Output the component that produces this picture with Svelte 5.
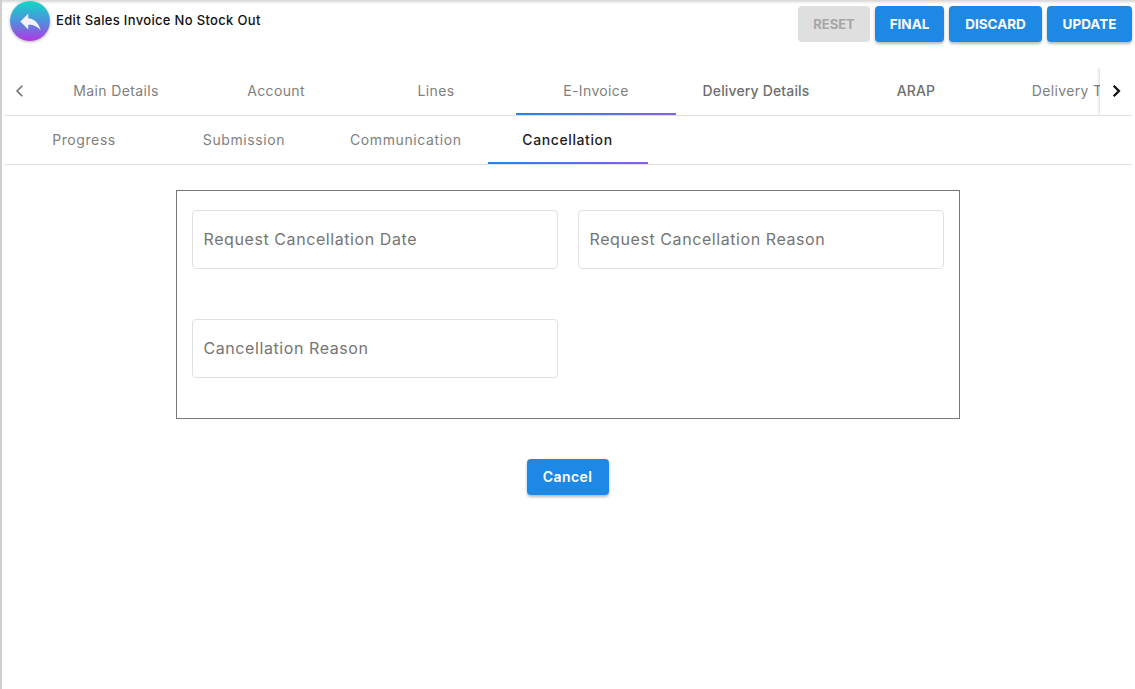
<script>
  const mainTabs = ['Main Details', 'Account', 'Lines', 'E-Invoice', 'Delivery Details', 'ARAP', 'Delivery Trip']
  const subTabs = ['Progress', 'Submission', 'Communication', 'Cancellation']
  let activeMain = 'E-Invoice'
  let activeSub = 'Cancellation'
  const actions = [
    { label: 'FINAL', width: 69 },
    { label: 'DISCARD', width: 93 },
    { label: 'UPDATE', width: 85 }
  ]
</script>

<div class="page">
  <header class="topbar">
    <div class="title-wrap">
      <button class="back" aria-label="Back">
        <svg viewBox="0 0 24 24" width="27" height="27">
          <path fill="#f4f1fb" d="M10 9V5l-7 7 7 7v-4.1c5 0 8.5 1.6 11 5.1-1-5-4-10-11-11z" />
        </svg>
      </button>
      <span class="title">Edit Sales Invoice No Stock Out</span>
    </div>
    <div class="actions">
      <button class="btn disabled" disabled>RESET</button>
      {#each actions as a}
        <button class="btn" style="width: {a.width}px">{a.label}</button>
      {/each}
    </div>
  </header>

  <nav class="tabs main-tabs">
    <button class="scroll-btn" aria-label="Scroll left">
      <svg viewBox="0 0 12 12" width="14" height="14"><path d="M8 1.5 L3.5 6 L8 10.5" fill="none" stroke="#777" stroke-width="1.5" /></svg>
    </button>
    <div class="tab-strip">
      {#each mainTabs as tab}
        <button class="tab" class:active={tab === activeMain} class:dark={tab === 'Delivery Details' || tab === 'ARAP'} on:click={() => (activeMain = tab)}>{tab}</button>
      {/each}
    </div>
    <button class="scroll-btn right" aria-label="Scroll right">
      <svg viewBox="0 0 12 12" width="14" height="14"><path d="M4 1.5 L8.5 6 L4 10.5" fill="none" stroke="#111" stroke-width="2" /></svg>
    </button>
  </nav>

  <nav class="tabs sub-tabs">
    {#each subTabs as tab}
      <button class="tab sub" class:active={tab === activeSub} class:selected={tab === activeSub} on:click={() => (activeSub = tab)}>{tab}</button>
    {/each}
  </nav>

  <main class="content">
    <section class="card">
      <div class="field">Request Cancellation Date</div>
      <div class="field">Request Cancellation Reason</div>
      <div class="field">Cancellation Reason</div>
    </section>
    <button class="btn cancel">Cancel</button>
  </main>
</div>

<style>
  :global(body) {
    margin: 0;
    background: #fff;
  }

  .page {
    height: 689px;
    box-sizing: border-box;
    border-left: 2px solid #cfcfcf;
    font-family: Inter, "Noto Sans", sans-serif;
    overflow: hidden;
    position: relative;
  }

  .page::before {
    content: '';
    position: absolute;
    top: 0;
    left: 0;
    right: 0;
    height: 4px;
    background: linear-gradient(#d5d5d5, #fff);
  }

  button {
    font-family: inherit;
    border: none;
    background: none;
    padding: 0;
    cursor: pointer;
  }

  .topbar {
    height: 66px;
    display: flex;
    justify-content: space-between;
    align-items: flex-start;
    padding-right: 3px;
    position: relative;
  }

  .title-wrap {
    display: flex;
    align-items: flex-start;
    margin: 1px 0 0 8px;
    gap: 6px;
  }

  .back {
    width: 40px;
    height: 40px;
    border-radius: 50%;
    background: linear-gradient(#12d8c4, #4d92dc 50%, #b436e4);
    box-shadow: 0 1px 3px rgba(0, 0, 0, 0.3);
    display: flex;
    align-items: center;
    justify-content: center;
  }

  .title {
    font-size: 13px;
    font-weight: 500;
    letter-spacing: 0.33px;
    color: #111;
    margin-top: 11px;
    line-height: 16px;
    white-space: nowrap;
  }

  .actions {
    display: flex;
    gap: 5px;
    margin-top: 6px;
  }

  .btn {
    height: 36px;
    border-radius: 4px;
    background: #1e88e5;
    color: #fff;
    font-size: 13.5px;
    font-weight: 700;
    box-shadow: 0 2px 3px rgba(0, 0, 0, 0.28);
  }

  .btn.disabled {
    width: 72px;
    background: #dfdfdf;
    color: #a6a6a6;
    font-size: 13px;
    box-shadow: none;
    cursor: default;
  }

  .tabs {
    display: flex;
    margin-left: 2px;
    margin-right: 3px;
    border-bottom: 1px solid #e0e0e0;
  }

  .main-tabs {
    height: 49px;
  }

  .sub-tabs {
    height: 48px;
  }

  .scroll-btn {
    width: 32px;
    flex-shrink: 0;
    display: flex;
    align-items: center;
    justify-content: center;
  }

  .scroll-btn.right {
    background: #fff;
    box-shadow: -1px 0 3px rgba(0, 0, 0, 0.16);
    clip-path: inset(2px 0 0 -6px);
    position: relative;
  }

  .tab-strip {
    display: flex;
    flex: 1;
    overflow: hidden;
  }

  .tab {
    flex: 0 0 160px;
    padding: 0 24px;
    box-sizing: border-box;
    height: 100%;
    color: #808080;
    font-size: 14px;
    letter-spacing: 0.36px;
    white-space: nowrap;
    overflow: hidden;
    position: relative;
  }

  .tab.dark {
    color: #6e6e6e;
    font-weight: 500;
    letter-spacing: 0.15px;
  }

  .tab.sub {
    flex: 0 0 auto;
    min-width: 160px;
    padding: 0 26px 2px;
    letter-spacing: 0.6px;
  }

  .tab.selected {
    color: #222;
    font-weight: 500;
    letter-spacing: 0.6px;
  }

  .tab.active::after {
    content: '';
    position: absolute;
    left: 0;
    right: 0;
    bottom: 0;
    height: 2px;
    background: linear-gradient(90deg, #1e88e5, #8a5fe8);
  }

  .content {
    display: flex;
    flex-direction: column;
    align-items: center;
    padding-top: 25px;
    margin-left: -2px;
  }

  .card {
    width: 784px;
    box-sizing: border-box;
    border: 1px solid #777;
    padding: 19px 15px 40px;
    display: grid;
    grid-template-columns: 366px 366px;
    column-gap: 20px;
    row-gap: 50px;
  }

  .field {
    height: 59px;
    box-sizing: border-box;
    border: 1px solid #e0e0e0;
    border-radius: 4px;
    padding: 0 11px 2px;
    display: flex;
    align-items: center;
    color: #757575;
    font-size: 16px;
    letter-spacing: 0.58px;
  }

  .btn.cancel {
    width: 82px;
    margin-top: 40px;
    font-size: 14px;
    font-weight: 600;
    letter-spacing: 0.4px;
    padding-bottom: 1px;
  }
</style>
